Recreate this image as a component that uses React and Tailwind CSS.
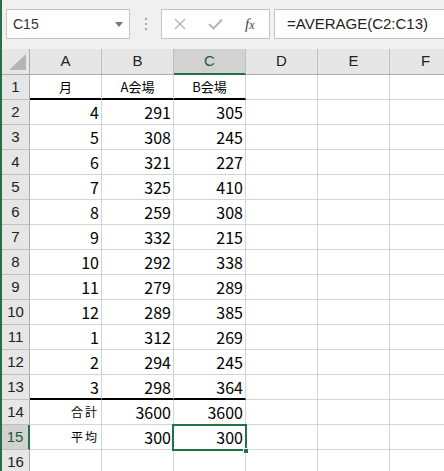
const rows = [
  { a: "月", b: "A会場", c: "B会場", head: true },
  { a: 4, b: 291, c: 305 },
  { a: 5, b: 308, c: 245 },
  { a: 6, b: 321, c: 227 },
  { a: 7, b: 325, c: 410 },
  { a: 8, b: 259, c: 308 },
  { a: 9, b: 332, c: 215 },
  { a: 10, b: 292, c: 338 },
  { a: 11, b: 279, c: 289 },
  { a: 12, b: 289, c: 385 },
  { a: 1, b: 312, c: 269 },
  { a: 2, b: 294, c: 245 },
  { a: 3, b: 298, c: 364 },
  { a: "合計", b: 3600, c: 3600, label: true },
  { a: "平均", b: 300, c: 300, label: true },
  { a: "", b: "", c: "" },
];

const cols = ["A", "B", "C", "D", "E", "F"];
const font = { fontFamily: '"Noto Sans CJK JP", sans-serif' };

function Cell({ value, kind, thick, selected }) {
  let align = "justify-end pr-[2px] text-[16px]";
  if (kind === "head") align = "justify-center text-[13px]";
  if (kind === "label") align = "justify-end pr-[2px] text-[12px] tracking-[2px]";
  return (
    <div
      className={`relative w-[72px] h-[25px] shrink-0 flex items-center bg-white text-black border-r border-[#d4d4d4] ${
        thick ? "border-b-2 border-b-black" : "border-b"
      } ${align}`}
    >
      <span className="leading-none">{value}</span>
      {selected && (
        <>
          <div className="absolute -left-[2px] -top-[1px] w-[75px] h-[27px] border-2 border-[#217346] z-10" />
          <div className="absolute left-[69px] top-[23px] w-[6px] h-[6px] bg-[#217346] border border-white z-20" />
        </>
      )}
    </div>
  );
}

export default function App() {
  return (
    <div
      className="w-[444px] h-[471px] overflow-hidden bg-[#f0f0f0] border-l-2 border-[#217346] flex flex-col"
      style={font}
    >
      {/* formula bar */}
      <div className="h-[49px] shrink-0 flex items-start pt-[9px] pl-[4px]">
        <div className="w-[124px] h-[30px] shrink-0 bg-white border border-[#c6c6c6] flex items-center justify-between pl-[6px] pr-[6px]">
          <span className="text-[14px] text-[#333]" style={{ fontFamily: '"Liberation Sans", sans-serif' }}>
            C15
          </span>
          <svg width="8" height="5" viewBox="0 0 8 5">
            <path d="M0 0 L8 0 L4 5 Z" fill="#777" />
          </svg>
        </div>
        <div className="w-[31px] h-[30px] shrink-0 flex flex-col items-center justify-center gap-[3px]">
          <span className="w-[2px] h-[2px] bg-[#aaa]" />
          <span className="w-[2px] h-[2px] bg-[#aaa]" />
          <span className="w-[2px] h-[2px] bg-[#aaa]" />
        </div>
        <div className="w-[109px] h-[30px] shrink-0 bg-white border border-[#c6c6c6] flex items-center">
          <svg width="12" height="12" viewBox="0 0 12 12" className="ml-[12px]">
            <path d="M1 1 L11 11 M11 1 L1 11" stroke="#b4b4b4" strokeWidth="1.4" />
          </svg>
          <svg width="15" height="12" viewBox="0 0 15 12" className="ml-[22px]">
            <path d="M1 6 L5.5 10.5 L14 1.5" stroke="#b4b4b4" strokeWidth="2" fill="none" />
          </svg>
          <span
            className="ml-[22px] italic text-[15px] text-[#444] leading-none"
            style={{ fontFamily: '"Liberation Serif", serif' }}
          >
            f<span className="text-[12px]">x</span>
          </span>
        </div>
        <div className="w-[200px] h-[30px] shrink-0 ml-[4px] bg-white border border-[#c6c6c6] flex items-center pl-[12px]">
          <span className="text-[15px] text-[#222]" style={{ fontFamily: '"Liberation Sans", sans-serif' }}>
            =AVERAGE(C2:C13)
          </span>
        </div>
      </div>

      {/* column headers */}
      <div className="flex h-[26px] shrink-0">
        <div className="relative w-[28px] shrink-0 bg-[#e6e6e6] border-r border-b border-[#ababab]">
          <svg width="28" height="25" viewBox="0 0 28 25" className="absolute left-0 top-0">
            <path d="M7 21 L24 21 L24 5 Z" fill="#b4b4b4" />
          </svg>
        </div>
        {cols.map((c) => (
          <div
            key={c}
            className={`w-[72px] shrink-0 flex items-center justify-center text-[15px] border-r border-[#c0c0c0] ${
              c === "C"
                ? "bg-[#d2d2d2] border-b-2 border-b-[#217346] text-[#1e5a3a]"
                : "bg-[#e6e6e6] border-b border-b-[#ababab] text-[#222]"
            }`}
            style={{ fontFamily: '"Liberation Sans", sans-serif' }}
          >
            {c}
          </div>
        ))}
      </div>

      {/* rows */}
      {rows.map((r, i) => {
        const n = i + 1;
        const thick = n === 1 || n === 13;
        const kind = r.head ? "head" : r.label ? "label" : "num";
        return (
          <div key={n} className="flex shrink-0">
            <div
              className={`w-[28px] h-[25px] shrink-0 flex items-center justify-center text-[15px] border-b border-[#c0c0c0] ${
                n === 15
                  ? "bg-[#d2d2d2] border-r-2 border-r-[#217346] text-[#1e5a3a]"
                  : "bg-[#e6e6e6] border-r border-r-[#ababab] text-[#222]"
              }`}
              style={{ fontFamily: '"Liberation Sans", sans-serif' }}
            >
              {n}
            </div>
            <Cell value={r.a} kind={kind} thick={thick} />
            <Cell value={r.b} kind={r.head ? "head" : "num"} thick={thick} />
            <Cell value={r.c} kind={r.head ? "head" : "num"} thick={thick} selected={n === 15} />
            <Cell value="" kind="num" />
            <Cell value="" kind="num" />
            <Cell value="" kind="num" />
          </div>
        );
      })}
    </div>
  );
}
